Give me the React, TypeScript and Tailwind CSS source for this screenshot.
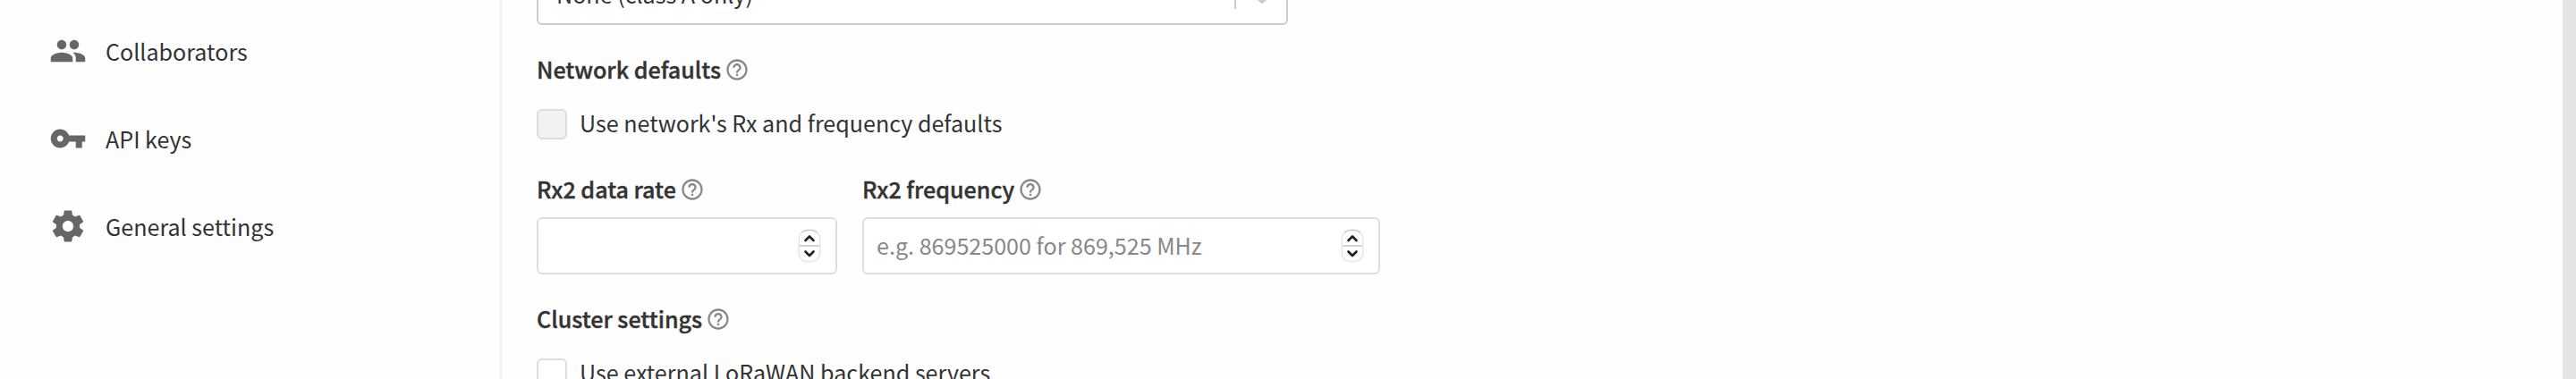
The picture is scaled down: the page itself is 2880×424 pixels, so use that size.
import type { ReactNode } from 'react'

const PEOPLE =
  'M16 11c1.66 0 2.99-1.34 2.99-3S17.66 5 16 5c-1.66 0-3 1.34-3 3s1.34 3 3 3zm-8 0c1.66 0 2.99-1.34 2.99-3S9.66 5 8 5C6.34 5 5 6.34 5 8s1.34 3 3 3zm0 2c-2.33 0-7 1.17-7 3.5V19h14v-2.5c0-2.33-4.67-3.5-7-3.5zm8 0c-.29 0-.62.02-.97.05 1.16.84 1.97 1.97 1.97 3.45V19h6v-2.5c0-2.33-4.67-3.5-7-3.5z'
const KEY =
  'M12.65 10C11.83 7.67 9.61 6 7 6c-3.31 0-6 2.69-6 6s2.69 6 6 6c2.61 0 4.83-1.67 5.65-4H17v4h4v-4h2v-4H12.65zM7 14c-1.1 0-2-.9-2-2s.9-2 2-2 2 .9 2 2-.9 2-2 2z'
const SETTINGS =
  'M19.43 12.98c.04-.32.07-.64.07-.98s-.03-.66-.07-.98l2.11-1.65c.19-.15.24-.42.12-.64l-2-3.46c-.12-.22-.39-.3-.61-.22l-2.49 1c-.52-.4-1.08-.73-1.69-.98l-.38-2.65C14.46 2.18 14.25 2 14 2h-4c-.25 0-.46.18-.49.42l-.38 2.65c-.61.25-1.17.59-1.69.98l-2.49-1c-.23-.09-.49 0-.61.22l-2 3.46c-.13.22-.07.49.12.64l2.11 1.65c-.04.32-.07.65-.07.98s.03.66.07.98l-2.11 1.65c-.19.15-.24.42-.12.64l2 3.46c.12.22.39.3.61.22l2.49-1c.52.4 1.08.73 1.69.98l.38 2.65c.03.24.24.42.49.42h4c.25 0 .46-.18.49-.42l.38-2.65c.61-.25 1.17-.59 1.69-.98l2.49 1c.23.09.49 0 .61-.22l2-3.46c.12-.22.07-.49-.12-.64l-2.11-1.65zM12 15.5c-1.93 0-3.5-1.57-3.5-3.5s1.57-3.5 3.5-3.5 3.5 1.57 3.5 3.5-1.57 3.5-3.5 3.5z'
const HELP =
  'M11 18h2v-2h-2v2zm1-16C6.48 2 2 6.48 2 12s4.48 10 10 10 10-4.48 10-10S17.52 2 12 2zm0 18c-4.41 0-8-3.59-8-8s3.59-8 8-8 8 3.59 8 8-3.59 8-8 8zm0-14c-2.21 0-4 1.79-4 4h2c0-1.1.9-2 2-2s2 .9 2 2c0 2-3 1.75-3 5h2c0-2.25 3-2.5 3-5 0-2.21-1.79-4-4-4z'
const CHEVRON =
  'M4.516 7.548c0.436-0.446 1.043-0.481 1.576 0l3.908 3.747 3.908-3.747c0.533-0.481 1.141-0.446 1.574 0 0.436 0.445 0.408 1.197 0 1.615-0.406 0.418-4.695 4.502-4.695 4.502-0.217 0.223-0.502 0.335-0.787 0.335s-0.57-0.112-0.789-0.335c0 0-4.287-4.084-4.695-4.502s-0.436-1.17 0-1.615z'

function NavItem({ icon, children }: { icon: string; children: ReactNode }) {
  return (
    <a className="flex h-[98px] items-center pl-[55px]">
      <svg viewBox="0 0 24 24" className="mr-[21px] size-[42px] shrink-0 fill-[#666]">
        <path d={icon} />
      </svg>
      <span>{children}</span>
    </a>
  )
}

function FieldTitle({ children }: { children: ReactNode }) {
  return (
    <div className="flex h-10 items-center whitespace-nowrap">
      <span className="font-medium [-webkit-text-stroke:0.4px_#333]">{children}</span>
      <svg viewBox="0 0 24 24" className="mt-0.5 ml-1 size-7 shrink-0 fill-[#888]">
        <path d={HELP} />
      </svg>
    </div>
  )
}

function Checkbox({ disabled, children }: { disabled?: boolean; children: ReactNode }) {
  return (
    <label className="flex h-[34px] items-center whitespace-nowrap">
      <span
        className={
          disabled
            ? 'size-[34px] shrink-0 rounded-[6px] border-2 border-[#ddd] bg-[#f2f2f2]'
            : 'size-[34px] shrink-0 rounded-[6px] border-2 border-[#ddd] bg-white'
        }
      />
      <span className="ml-[14px] pb-1">{children}</span>
    </label>
  )
}

function Stepper() {
  return (
    <span className="flex h-9 w-6 shrink-0 flex-col rounded-[10px] border border-[#e4e4e4] border-t-[#bbb] bg-white shadow-[0_0_2px_rgba(0,0,0,0.15)]">
      <svg viewBox="0 0 22 34" className="h-[34px] w-[22px]" fill="none">
        <path d="M0 17h22" stroke="#d4d4d4" strokeWidth="2" />
        <path
          d="M6.5 11L11 6.5L15.5 11M6.5 23.5L11 28L15.5 23.5"
          stroke="#222"
          strokeWidth="2.6"
          strokeLinecap="round"
          strokeLinejoin="round"
        />
      </svg>
    </span>
  )
}

function NumberField({ placeholder }: { placeholder?: string }) {
  return (
    <div className="flex h-16 items-center justify-between rounded-[6px] border-2 border-[#ddd] bg-white pr-[17.5px] pl-[14px]">
      <span className="pb-0.5 whitespace-nowrap text-[#888]">{placeholder}</span>
      <Stepper />
    </div>
  )
}

export default function App() {
  return (
    <div className="flex h-[424px] w-[2880px] overflow-hidden bg-[#fefefe] font-['Noto_Sans_CJK_SC','Noto_Sans',sans-serif] text-[25.1px] leading-[36px] text-[#333]">
      <nav className="w-[561px] shrink-0 border-r-2 border-[#eee] pt-2">
        <NavItem icon={PEOPLE}>Collaborators</NavItem>
        <NavItem icon={KEY}>API keys</NavItem>
        <NavItem icon={SETTINGS}>General settings</NavItem>
      </nav>
      <main className="flex grow flex-col pl-[39px]">
        <div className="flex h-7 w-[840px] shrink-0 items-end justify-between overflow-hidden rounded-b-[6px] border-2 border-t-0 border-[#ccc] bg-white">
          <span className="mb-[15px] pl-[20px]">None (class A only)</span>
          <span className="flex items-end pb-[10px]">
            <span className="mb-[6px] h-[10px] w-0.5 bg-[#ccc]" />
            <svg viewBox="0 0 20 20" className="mr-[7px] ml-[9px] size-10 fill-[#ccc]">
              <path d={CHEVRON} />
            </svg>
          </span>
        </div>
        <div className="mt-[29px]">
          <FieldTitle>Network defaults</FieldTitle>
        </div>
        <div className="mt-[25px]">
          <Checkbox disabled>Use network's Rx and frequency defaults</Checkbox>
        </div>
        <div className="mt-[35px] flex gap-7">
          <div className="w-[336px]">
            <FieldTitle>Rx2 data rate</FieldTitle>
            <div className="mt-3">
              <NumberField />
            </div>
          </div>
          <div className="w-[579px]">
            <FieldTitle>Rx2 frequency</FieldTitle>
            <div className="mt-3">
              <NumberField placeholder="e.g. 869525000 for 869,525 MHz" />
            </div>
          </div>
        </div>
        <div className="mt-[29px]">
          <FieldTitle>Cluster settings</FieldTitle>
        </div>
        <div className="mt-[25px]">
          <Checkbox>Use external LoRaWAN backend servers</Checkbox>
        </div>
      </main>
      <div className="w-[15px] shrink-0 bg-[#e4e4e4]" />
    </div>
  )
}
